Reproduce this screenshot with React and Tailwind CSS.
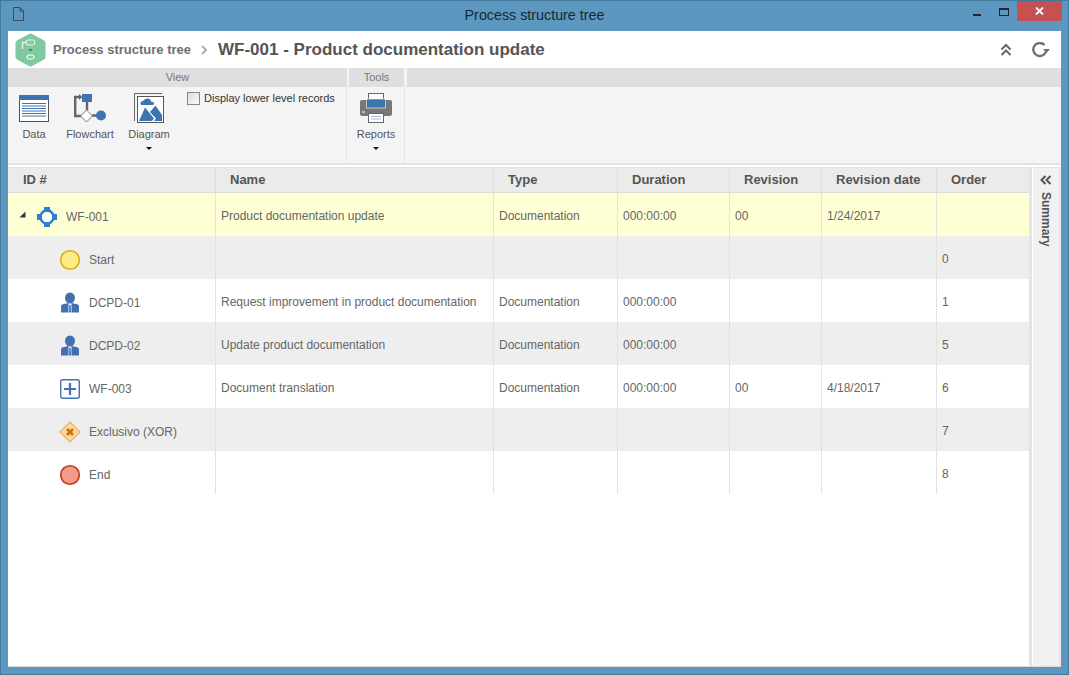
const Caret = () => (
  <svg width="6" height="3" viewBox="0 0 6 3" className="block"><path d="M0 0H6L3 3Z" fill="#111" /></svg>
);

const icons = {
  process: (
    <svg width="22" height="22" viewBox="0 0 22 22">
      <circle cx="11" cy="11" r="6.6" fill="#fff" stroke="#2f7fd0" strokeWidth="2.6" />
      <rect x="8" y="1" width="6" height="5" fill="#2f7fd0" />
      <rect x="8" y="16" width="6" height="5" fill="#2f7fd0" />
      <rect x="1" y="8" width="5" height="6" fill="#2f7fd0" />
      <rect x="16" y="8" width="5" height="6" fill="#2f7fd0" />
    </svg>
  ),
  start: (
    <svg width="22" height="22" viewBox="0 0 22 22"><circle cx="11" cy="11" r="9.3" fill="#fdec85" stroke="#d9ae1b" strokeWidth="1.6" /></svg>
  ),
  end: (
    <svg width="22" height="22" viewBox="0 0 22 22"><circle cx="11" cy="11" r="9.3" fill="#f39c85" stroke="#bd3a22" strokeWidth="1.6" /></svg>
  ),
  user: (
    <svg width="22" height="22" viewBox="0 0 22 22">
      <ellipse cx="11" cy="6" rx="5" ry="5.5" fill="#4470b0" />
      <path d="M2 20.500V14.500Q2 12.500 5 12L9.500 11V20.500ZM12.500 11L17 12Q20 12.500 20 14.500V20.500H12.500ZM10.300 13H11.700L12 20.500H10Z" fill="#4470b0" />
    </svg>
  ),
  sub: (
    <svg width="22" height="22" viewBox="0 0 22 22">
      <rect x="1.700" y="1.700" width="18.600" height="18.600" rx="2" fill="#fff" stroke="#4470b0" strokeWidth="1.400" />
      <path d="M11 5V17M5 11H17" stroke="#4470b0" strokeWidth="2.200" />
    </svg>
  ),
  xor: (
    <svg width="22" height="22" viewBox="0 0 22 22">
      <path d="M11 1L21 11L11 21L1 11Z" fill="#fbd9a5" stroke="#f0ad5b" strokeWidth="1.200" />
      <path d="M8 8L14 14M14 8L8 14" stroke="#d0700f" strokeWidth="2.600" />
    </svg>
  ),
};

const cols = [
  "w-[208px]",
  "w-[278px]",
  "w-[124px]",
  "w-[112px]",
  "w-[92px]",
  "w-[115px]",
  "w-[92px]",
];

const headers = ["ID #", "Name", "Type", "Duration", "Revision", "Revision date", "Order"];

const rows = [
  { bg: "bg-[#ffffd6]", icon: "process", id: "WF-001", top: true, c: ["Product documentation update", "Documentation", "000:00:00", "00", "1/24/2017", ""] },
  { bg: "bg-[#eeeeee]", icon: "start", id: "Start", c: ["", "", "", "", "", "0"] },
  { bg: "bg-white", icon: "user", id: "DCPD-01", c: ["Request improvement in product documentation", "Documentation", "000:00:00", "", "", "1"] },
  { bg: "bg-[#eeeeee]", icon: "user", id: "DCPD-02", c: ["Update product documentation", "Documentation", "000:00:00", "", "", "5"] },
  { bg: "bg-white", icon: "sub", id: "WF-003", c: ["Document translation", "Documentation", "000:00:00", "00", "4/18/2017", "6"] },
  { bg: "bg-[#eeeeee]", icon: "xor", id: "Exclusivo (XOR)", c: ["", "", "", "", "", "7"] },
  { bg: "bg-white", icon: "end", id: "End", c: ["", "", "", "", "", "8"] },
];

function RibbonButton({ label, caret, children, w }) {
  return (
    <div className={`flex flex-col items-center ${w}`}>
      <div className="h-[33px] flex items-end justify-center">{children}</div>
      <div className="mt-[6px] text-[11px] leading-[13px] text-[#555]">{label}</div>
      {caret && <div className="mt-[6px]"><Caret /></div>}
    </div>
  );
}

export default function App() {
  return (
    <div className="w-[1069px] h-[675px] overflow-hidden flex flex-col bg-[#5b97bf] border border-[#44799f] font-['Liberation_Sans',Arial,sans-serif]">
      {/* Title bar */}
      <div className="h-[30px] shrink-0 flex items-center pl-[12px]">
        <svg width="11" height="14" viewBox="0 0 11 14" className="mb-[4px]">
          <path d="M1 .5H7L10.500 4V13.500H.5V.5ZM7 .5V4H10.500" fill="none" stroke="#3f4a52" />
        </svg>
        <div className="flex-1 text-center text-[14.3px] text-[#1c2730] pl-[72px]">Process structure tree</div>
        <div className="flex items-start self-start h-[21px] mr-[6px]">
          <div className="w-[8px] h-[2px] bg-[#1f2730] mt-[13px] mr-[18px]" />
          <div className="w-[10px] h-[8px] border border-[#1f2730] border-t-2 mt-[7px] mr-[8px]" />
          <div className="w-[45px] h-[20px] bg-[#c75050] flex items-center justify-center">
            <svg width="9" height="8" viewBox="0 0 9 8"><path d="M1 .5L8 7.500M8 .5L1 7.500" stroke="#fff" strokeWidth="1.800" /></svg>
          </div>
        </div>
      </div>

      {/* Window content */}
      <div className="flex-1 min-h-0 mx-[7px] mb-[7px] bg-white flex flex-col border-b border-[#dcdcdc]">
        {/* Header */}
        <div className="h-[37px] shrink-0 flex items-center pl-[7px] pr-[11px]">
          <svg width="31" height="34" viewBox="0 0 31 34">
            <path d="M13.500 1.200Q15.500 0 17.500 1.200L29 7.500Q30.500 8.500 30.500 10V24Q30.500 25.500 29 26.500L17.500 32.800Q15.500 34 13.500 32.800L2 26.500Q.5 25.500 .5 24V10Q.5 8.500 2 7.500Z" fill="#7fc8a0" />
            <rect x="11.500" y="7" width="8" height="5" rx="1.500" fill="none" stroke="#e4f4ea" strokeWidth="1.200" />
            <path d="M11 9.500H7.500V16" fill="none" stroke="#e4f4ea" strokeWidth="1.400" />
            <ellipse cx="15.500" cy="17" rx="2.800" ry="2" fill="#3e9e6a" stroke="#cfeeda" strokeWidth=".6" />
            <ellipse cx="15.500" cy="24" rx="3.500" ry="2.200" fill="none" stroke="#e4f4ea" strokeWidth="1.200" />
          </svg>
          <div className="ml-[7px] text-[13px] font-bold text-[#6f6f6f]">Process structure tree</div>
          <svg width="6" height="10" viewBox="0 0 6 10" className="ml-[10px]"><path d="M1 1L5 5L1 9" fill="none" stroke="#9a9a9a" strokeWidth="1.600" /></svg>
          <div className="ml-[11px] text-[17px] font-bold text-[#555]">WF-001 - Product documentation update</div>
          <div className="flex-1" />
          <svg width="12" height="14" viewBox="0 0 12 14" className="mr-[20px]"><path d="M1.500 6.500L6 2L10.500 6.500M1.500 12L6 7.500L10.500 12" fill="none" stroke="#666" strokeWidth="2" /></svg>
          <svg width="18" height="16" viewBox="0 0 18 16"><path d="M12.500 3A6.500 6.500 0 1 0 14 9.500" fill="none" stroke="#6f6f6f" strokeWidth="2.400" /><path d="M11 7L18 7L14.500 11Z" fill="#6f6f6f" /></svg>
        </div>

        {/* Ribbon */}
        <div className="h-[95px] shrink-0 flex flex-col bg-[#f4f4f4]">
          <div className="h-[19px] flex bg-[#dfdfdf] text-[11px] text-[#777]">
            <div className="w-[339px] flex items-center justify-center">View</div>
            <div className="w-[2px] bg-[#f4f4f4]" />
            <div className="w-[55px] flex items-center justify-center">Tools</div>
            <div className="w-[3px] bg-[#f4f4f4]" />
          </div>
          <div className="flex-1 flex">
            <div className="w-[339px] flex pt-[2px] pl-[5px] border-r border-[#e6e6e6]">
              <RibbonButton label="Data" w="w-[42px]">
                <svg width="30" height="27" viewBox="0 0 30 27">
                  <rect x=".5" y=".5" width="29" height="26" fill="#fff" stroke="#555" />
                  <rect width="30" height="5" fill="#3d75b0" />
                  <path d="M3 8.500H27M3 11H27M3 13.500H27M3 16H27M3 18.500H27M3 21H27" stroke="#3d75b0" />
                </svg>
              </RibbonButton>
              <RibbonButton label="Flowchart" w="w-[56px] ml-[7px]">
                <svg width="32" height="28" viewBox="0 0 32 28">
                  <path d="M6 3H1.200V22H8" fill="none" stroke="#666" strokeWidth="2.400" />
                  <path d="M5 0L8.500 3L5 6Z" fill="#666" />
                  <path d="M13 8V16M18 21.500H24" stroke="#666" strokeWidth="2.400" />
                  <rect x="8" y="0" width="10" height="8" fill="#3d75b0" />
                  <path d="M12.500 16L18.500 22L12.500 28L6.500 22Z" fill="#fff" stroke="#777" />
                  <circle cx="27" cy="21.500" r="5" fill="#3d75b0" />
                </svg>
              </RibbonButton>
              <RibbonButton label="Diagram" caret w="w-[56px] ml-[3px]">
                <svg width="30" height="30" viewBox="0 0 30 30" className="-mb-[1px]">
                  <path d="M.5 28V.5H28" fill="none" stroke="#666" />
                  <rect x="3.500" y="3.500" width="26" height="26" fill="#fff" stroke="#555" />
                  <path d="M5 28L11 14.500L20 25.500L18 28Z" fill="#3d75b0" />
                  <path d="M16 19L21.500 12.500L28 22V28H20L22 25.500Z" fill="#3d75b0" />
                  <path d="M6.500 10.500Q6.500 8 9 8Q11 5 14 5.500Q17 6 17 8.500Q20 8.500 20 10.500Q20 12 18.500 12H8Q6.500 12 6.500 10.500Z" fill="#3d75b0" />
                </svg>
              </RibbonButton>
              <div className="ml-[10px] flex items-center h-[13px] mt-[3px] text-[11px] text-[#333]">
                <span className="w-[13px] h-[13px] border border-[#888] bg-gradient-to-br from-[#ddd] to-[#fafafa] mr-[4px]" />
                Display lower level records
              </div>
            </div>
            <div className="w-[58px] flex justify-center pt-[2px] pl-[1px] border-r border-[#e6e6e6]">
              <RibbonButton label="Reports" caret w="w-[57px]">
                <svg width="32" height="30" viewBox="0 0 32 30" className="-mb-[1px]">
                  <rect x="8.500" y=".5" width="15" height="8" fill="#fff" stroke="#666" />
                  <rect y="7" width="32" height="16" rx="2" fill="#777" />
                  <rect x="6.300" y="6" width="19.400" height="9" fill="#3d75b0" stroke="#fff" strokeWidth=".6" />
                  <rect x="2" y="18.500" width="3" height="1" fill="#fff" />
                  <rect x="8.500" y="20.500" width="15" height="9" fill="#fff" stroke="#666" />
                  <path d="M11 23.500H21M11 26H21" stroke="#9db8d8" />
                </svg>
              </RibbonButton>
            </div>
          </div>
        </div>

        {/* Body */}
        <div className="flex-1 min-h-0 flex border-t-2 border-[#e2e2e2]">
          <div className="w-[1021px] shrink-0 flex flex-col pt-[2px]">
            <div className="flex h-[26px] bg-[#ebebeb] border-b border-[#dadada] border-t border-t-[#e2e2e2] shrink-0">
              {headers.map((h, i) => (
                <div key={h} className={`${cols[i]} shrink-0 flex items-center ${i === 0 ? "pl-[15px]" : "pl-[14px]"} text-[13px] font-bold text-[#555] border-r border-[#dedede] last:border-r-0`}>
                  {h}
                </div>
              ))}
            </div>
            {rows.map((r) => (
              <div key={r.id} className={`flex h-[43px] shrink-0 ${r.bg}`}>
                <div className={`${cols[0]} shrink-0 flex items-center pt-[4px] border-r border-[#e2e2e2] text-[12px] text-[#666] ${r.top ? "pl-[11px]" : "pl-[51px]"}`}>
                  {r.top && (
                    <svg width="7" height="7" viewBox="0 0 7 7" className="mr-[10px] mb-[5px]"><path d="M6.500 .5V6.500H.5Z" fill="#333" /></svg>
                  )}
                  {icons[r.icon]}
                  <span className="ml-[8px]">{r.id}</span>
                </div>
                {r.c.map((v, i) => (
                  <div key={i} className={`${cols[i + 1]} shrink-0 flex items-center pl-[5px] pt-[3px] text-[12px] text-[#666] ${i < 5 ? "border-r border-[#e2e2e2]" : ""}`}>
                    {v}
                  </div>
                ))}
              </div>
            ))}
          </div>
          <div className="flex-1 flex pt-[2px] bg-white">
            <div className="w-[3px] bg-[#e6e3e3]" />
            <div className="w-[27px] ml-[1px] bg-[#f2f1f1] border-r border-[#e4e4e4] border-t border-t-[#e2e2e2] flex flex-col items-center pt-[7px]">
              <svg width="12" height="10" viewBox="0 0 12 10"><path d="M5.500 1L1.500 5L5.500 9M10.500 1L6.500 5L10.500 9" fill="none" stroke="#555" strokeWidth="2" /></svg>
              <div className="mt-[7px] text-[12px] font-bold leading-[14px] text-[#555] [writing-mode:vertical-rl]">Summary</div>
            </div>
            <div className="flex-1 bg-[#ededed]" />
          </div>
        </div>
      </div>
    </div>
  );
}
